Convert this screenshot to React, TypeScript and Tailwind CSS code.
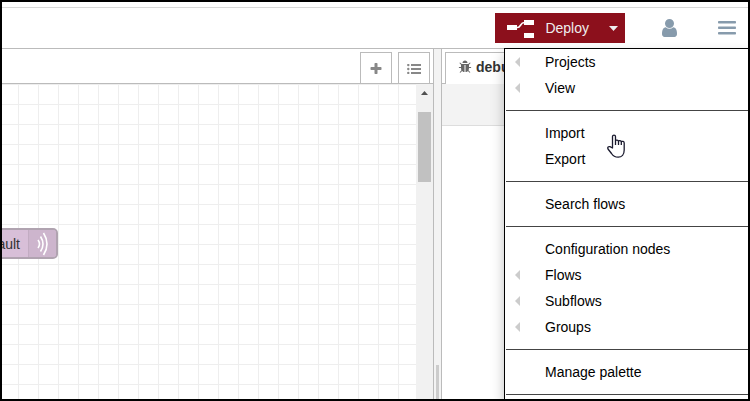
import { Fragment } from "react";

const FONT = "font-['Liberation_Sans',Arial,sans-serif]";

const menuGroups: { label: string; submenu?: boolean }[][] = [
  [{ label: "Projects", submenu: true }, { label: "View", submenu: true }],
  [{ label: "Import" }, { label: "Export" }],
  [{ label: "Search flows" }],
  [
    { label: "Configuration nodes" },
    { label: "Flows", submenu: true },
    { label: "Subflows", submenu: true },
    { label: "Groups", submenu: true },
  ],
  [{ label: "Manage palette" }],
  [],
];

function DeployIcon() {
  return (
    <svg className="h-5 w-7" viewBox="0 0 28 20" fill="none" aria-hidden="true">
      <path d="M10 9.500h1.500c3.500 0 2.500-5 7-5" stroke="#fff" strokeWidth="1.600" />
      <path d="M1 7h10v5H1zM18 2h10v5H18zM18 15h10v5H18z" fill="#fff" />
    </svg>
  );
}

function UserIcon() {
  return (
    <svg className="h-[18px] w-[15px]" viewBox="0 0 1280 1536" fill="currentColor" aria-hidden="true">
      <path d="M1280 1271q0 109-62.5 187t-150.5 78h-854q-88 0-150.500-78t-62.500-187q0-85 8.500-160.500t31.500-152 58.500-131 94-89 134.500-34.500q131 128 313 128t313-128q76 0 134.500 34.500t94 89 58.500 131 31.500 152 8.500 160.500zm-256-887q0 159-112.500 271.500t-271.500 112.500-271.500-112.500-112.500-271.500 112.500-271.500 271.500-112.500 271.500 112.500 112.500 271.500z" />
    </svg>
  );
}

function BarsIcon() {
  return (
    <svg className="h-4 w-[18px]" viewBox="0 0 18 16" fill="currentColor" aria-hidden="true">
      <rect y="1" width="18" height="2.500" rx=".8" />
      <rect y="6.500" width="18" height="2.500" rx=".8" />
      <rect y="12" width="18" height="2.500" rx=".8" />
    </svg>
  );
}

function PlusIcon() {
  return (
    <svg className="size-[14px]" viewBox="0 0 1792 1792" fill="currentColor" aria-hidden="true">
      <path d="M1600 736v192q0 40-28 68t-68 28h-416v416q0 40-28 68t-68 28h-192q-40 0-68-28t-28-68v-416h-416q-40 0-68-28t-28-68v-192q0-40 28-68t68-28h416v-416q0-40 28-68t68-28h192q40 0 68 28t28 68v416h416q40 0 68 28t28 68z" />
    </svg>
  );
}

function ListIcon() {
  return (
    <svg className="h-[10px] w-[14px]" viewBox="0 0 14 10" fill="currentColor" aria-hidden="true">
      <circle cx="1.300" cy="1" r="1.200" />
      <circle cx="1.300" cy="5" r="1.200" />
      <circle cx="1.300" cy="9" r="1.200" />
      <path d="M4 0h10v2H4zM4 4h10v2H4zM4 8h10v2H4z" />
    </svg>
  );
}

function BugIcon() {
  return (
    <svg className="size-[14px]" viewBox="0 0 1792 1792" fill="currentColor" aria-hidden="true">
      <path d="M1696 960q0 26-19 45t-45 19h-224q0 171-67 290l208 209q19 19 19 45t-19 45q-18 19-45 19t-45-19l-198-197q-5 5-15 13t-42 28.500-65 36.500-82 29-97 13v-896h-128v896q-51 0-101.500-13.500t-87-33-66-39-43.500-32.500l-15-14-183 207q-20 21-48 21-24 0-43-16-19-18-20.500-44.500t15.500-46.500l202-227q-58-114-58-274h-224q-26 0-45-19t-19-45 19-45 45-19h224v-294l-173-173q-19-19-19-45t19-45 45-19 45 19l173 173h844l173-173q19-19 45-19t45 19 19 45-19 45l-173 173v294h224q26 0 45 19t19 45zm-480-576h-640q0-133 93.500-226.500t226.500-93.500 226.500 93.500 93.500 226.500z" />
    </svg>
  );
}

function HandCursor() {
  return (
    <svg
      className="absolute top-[85px] left-[102px] h-6 w-[18px]"
      viewBox="0 0 18 24"
      fill="#fff"
      stroke="#1a1a2e"
      strokeWidth="1.300"
      strokeLinejoin="round"
      aria-hidden="true"
    >
      <path d="M5.500 14V2.500C5.500.6 8.500.6 8.500 2.500V6.500C9 5.800 11.200 5.900 11.500 7c.5-.6 2.500-.4 2.800.6.700-.5 2.900-.3 2.900 1.400V16c0 4.500-2.500 7.200-6 7.200-3.500 0-5.200-1.200-6.700-3.700L1 15C.2 13.300 1.500 12.200 3 12.700z" />
      <path d="M8.500 6.500V11M11.500 7V11M14.300 7.600V11" />
    </svg>
  );
}

function Header() {
  return (
    <header className="mt-[5px] flex h-[41px] shrink-0 items-center justify-end border-t border-[#d8d8d8] bg-white pr-3">
      <div className="flex h-[30px] bg-[#8c101c] text-[#eee]">
        <button className="flex items-center gap-[11px] pl-[11px] text-sm">
          <DeployIcon />
          Deploy
        </button>
        <button className="flex w-9 items-center justify-center pl-3" aria-label="Deployment options">
          <svg className="h-[5px] w-[9px]" viewBox="0 0 9 5" fill="currentColor">
            <path d="M0 0h9L4.500 5z" />
          </svg>
        </button>
      </div>
      <button className="ml-[37px] text-[#879bac]" aria-label="User">
        <UserIcon />
      </button>
      <button className="ml-[41px] text-[#879bac]" aria-label="Main menu">
        <BarsIcon />
      </button>
    </header>
  );
}

function FlowNode() {
  return (
    <div className="absolute top-[144px] left-[-60px] flex h-[31px] w-[116px] overflow-hidden rounded-[5px] border-2 border-[#b0a3b0] bg-[#d8bfd8] text-sm text-[#333]">
      <span className="flex flex-1 items-center justify-end pr-2">default</span>
      <span className="flex w-7 items-center justify-center border-l border-[#c2acc2] bg-[#cdb5cd]">
        <svg className="h-6 w-3" viewBox="0 0 12 24" fill="none" stroke="#fff" strokeWidth="1.600">
          <path d="M1 8q3 4 0 8M3.500 4.500q5 7.500 0 15M6.500 1q7 11 0 22" />
        </svg>
      </span>
    </div>
  );
}

function Workspace() {
  return (
    <main className="flex w-[432px] shrink-0 flex-col border-t border-r border-[#bbb] bg-white">
      <div className="flex h-[35px] shrink-0 items-end justify-end gap-[6px] border-b border-[#bbb] pr-[3px]">
        <button className="flex h-[31px] w-8 items-center justify-center border border-b-0 border-[#bbb] pt-0.5 text-[#888]" aria-label="Add flow">
          <PlusIcon />
        </button>
        <button className="flex h-[31px] w-8 items-center justify-center border border-b-0 border-[#bbb] pt-0.5 text-[#888]" aria-label="List flows">
          <ListIcon />
        </button>
      </div>
      <div className="flex min-h-0 flex-1">
        <div className="relative flex-1 overflow-hidden bg-[linear-gradient(to_right,#eee_1px,transparent_1px),linear-gradient(to_bottom,#eee_1px,transparent_1px)] bg-[size:20px_20px] bg-[position:16px_0px]">
          <FlowNode />
        </div>
        <div className="flex w-[17px] flex-col items-center bg-[#f1f1f1] pt-[7px]">
          <svg className="h-1 w-[7px]" viewBox="0 0 7 4" fill="#505050">
            <path d="M0 4h7L3.500 0z" />
          </svg>
          <div className="mt-[17px] h-[70px] w-[13px] bg-[#c1c1c1]" />
        </div>
      </div>
    </main>
  );
}

function Sidebar() {
  return (
    <aside className="flex flex-1 flex-col border-t border-l border-[#bbb] bg-white">
      <div className="flex h-[35px] shrink-0 items-end border-b border-[#bbb] pl-[3px]">
        <button className="-mb-px flex h-8 w-28 items-center gap-1 border border-b-0 border-[#bbb] bg-white pb-1 pl-3 text-sm font-bold text-[#333]">
          <span className="text-[#666]">
            <BugIcon />
          </span>
          debug
        </button>
      </div>
      <div className="h-[42px] shrink-0 border-b border-[#ddd] bg-[#f3f3f3]" />
    </aside>
  );
}

function MainMenu() {
  return (
    <nav className="absolute top-[46px] right-0 bottom-0 w-[244px] overflow-hidden border-t border-l border-black bg-white pl-px text-sm text-black shadow-[0_6px_12px_rgba(0,0,0,0.25)]">
      {menuGroups.map((group, index) => (
        <Fragment key={index}>
          {index > 0 && <hr className="my-[9px] border-t border-[#444]" />}
          {group.map((item) => (
            <button key={item.label} className="flex h-[26px] w-full items-center pl-[9px] text-left">
              <span className="w-[30px]">
                {item.submenu && (
                  <svg className="h-[10px] w-[5px]" viewBox="0 0 5 10" fill="#ccc">
                    <path d="M5 0v10L0 5z" />
                  </svg>
                )}
              </span>
              {item.label}
            </button>
          ))}
        </Fragment>
      ))}
      <HandCursor />
    </nav>
  );
}

export default function App() {
  return (
    <div className={`h-screen w-full border-2 border-black bg-white ${FONT}`}>
      <div className="relative flex h-full flex-col overflow-hidden">
        <Header />
        <div className="flex min-h-0 flex-1">
          <Workspace />
          <div className="flex w-[7px] shrink-0 items-end justify-center border-t border-[#bbb] bg-[#f3f3f3]">
            <div className="h-[34px] w-[3px] bg-[#ccc]" />
          </div>
          <Sidebar />
        </div>
        <MainMenu />
      </div>
    </div>
  );
}
